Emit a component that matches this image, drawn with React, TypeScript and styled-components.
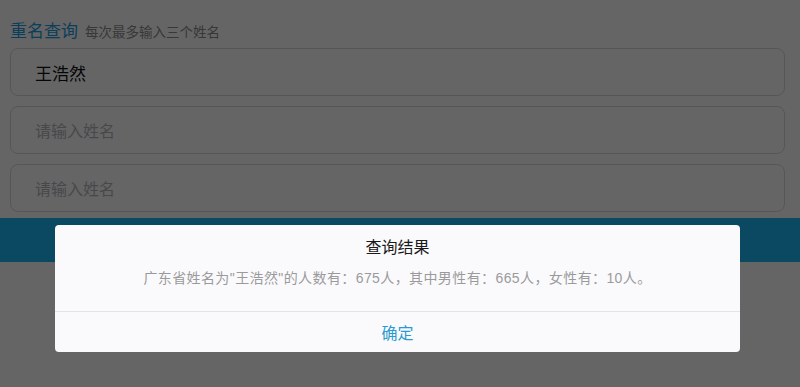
import React from "react";
import styled, { createGlobalStyle } from "styled-components";

const GlobalStyle = createGlobalStyle`
  html, body {
    margin: 0;
    padding: 0;
    background: #ffffff;
    font-family: "Liberation Sans", "Noto Sans CJK SC", sans-serif;
  }
`;

const Page = styled.div`
  position: relative;
  width: 800px;
  height: 387px;
  overflow: hidden;
  background: #fdfdff;
`;

const Form = styled.div`
  display: flex;
  flex-direction: column;
  padding: 17px 15px 0 10px;
`;

const Heading = styled.div`
  display: flex;
  align-items: baseline;
  gap: 7px;
  height: 22px;
  margin-bottom: 9px;
`;

const HeadingTitle = styled.span`
  font-size: 17px;
  color: #1a9be0;
`;

const HeadingHint = styled.span`
  font-size: 13.5px;
  color: #8c8c8c;
`;

const Inputs = styled.div`
  display: flex;
  flex-direction: column;
  gap: 10px;
`;

const NameBox = styled.div<{ $filled?: boolean }>`
  height: 48px;
  box-sizing: border-box;
  border: 1px solid #d8d8dc;
  border-radius: 8px;
  padding-left: 24px;
  display: flex;
  align-items: center;
  font-size: ${({ $filled }) => ($filled ? "17px" : "16px")};
  color: ${({ $filled }) => ($filled ? "#111" : "#b4b4b8")};
`;

const SubmitBar = styled.div`
  margin: 6px -15px 0 -10px;
  height: 44px;
  background: #1cb4f5;
`;

const Overlay = styled.div`
  position: absolute;
  inset: 0;
  background: rgba(0, 0, 0, 0.6);
`;

const Dialog = styled.div`
  position: absolute;
  left: 55px;
  top: 225px;
  width: 685px;
  background: #fafafc;
  border-radius: 4px;
  display: flex;
  flex-direction: column;
`;

const DialogBody = styled.div`
  height: 87px;
  box-sizing: border-box;
  padding-top: 12px;
  display: flex;
  flex-direction: column;
  align-items: center;
  border-bottom: 1px solid #e4e4e6;
`;

const DialogTitle = styled.div`
  font-size: 16px;
  color: #1a1a1a;
  line-height: 22px;
`;

const DialogText = styled.div`
  margin-top: 10px;
  font-size: 14px;
  letter-spacing: 0.4px;
  color: #9a9a9c;
  line-height: 18px;
`;

const DialogButton = styled.div`
  height: 40px;
  display: flex;
  align-items: center;
  justify-content: center;
  font-size: 16px;
  color: #2a9bd0;
`;

export default function App() {
  return (
    <Page>
      <GlobalStyle />
      <Form>
        <Heading>
          <HeadingTitle>重名查询</HeadingTitle>
          <HeadingHint>每次最多输入三个姓名</HeadingHint>
        </Heading>
        <Inputs>
          <NameBox $filled>王浩然</NameBox>
          <NameBox>请输入姓名</NameBox>
          <NameBox>请输入姓名</NameBox>
        </Inputs>
        <SubmitBar />
      </Form>
      <Overlay />
      <Dialog>
        <DialogBody>
          <DialogTitle>查询结果</DialogTitle>
          <DialogText>
            广东省姓名为"王浩然"的人数有：675人，其中男性有：665人，女性有：10人。
          </DialogText>
        </DialogBody>
        <DialogButton>确定</DialogButton>
      </Dialog>
    </Page>
  );
}
